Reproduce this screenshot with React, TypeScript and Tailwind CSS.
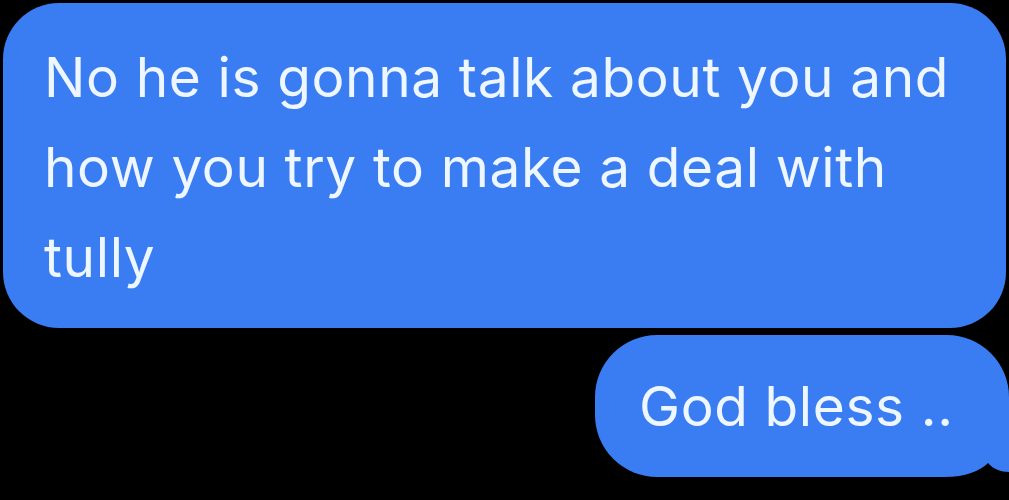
export default function App() {
	return (
		<div
			className="w-[1009px] h-[500px] bg-black flex flex-col overflow-hidden"
			style={{ fontFamily: "Inter, 'Liberation Sans', sans-serif" }}
		>
			{/* Incoming long bubble */}
			<div className="mx-[3px] mt-[3px] h-[325px] rounded-[56px] bg-[#3a7cf2] pl-[41px] pt-[29px]">
				<p className="text-[55px] leading-[90px] text-[#eef6ff] tracking-[0.6px]">
					No he is gonna talk about you and
					<br />
					how you try to make a deal with
					<br />
					tully
				</p>
			</div>

			{/* Reply bubble with tail */}
			<div className="relative self-end mt-[7px] w-[414px] h-[142px] rounded-[62px] rounded-br-none bg-[#3a7cf2] pl-[44px] flex items-center">
				<span className="text-[55px] leading-[90px] text-[#eef6ff] tracking-[0.6px]">
					God bless ..
				</span>
				<svg
					className="absolute right-0 bottom-0"
					width="64"
					height="18"
					viewBox="0 0 64 18"
				>
					<path d="M0,18 C20,18 35,12 43,4 C48,10 56,13 64,13 L64,18 Z" fill="#000" />
				</svg>
			</div>
		</div>
	);
}
